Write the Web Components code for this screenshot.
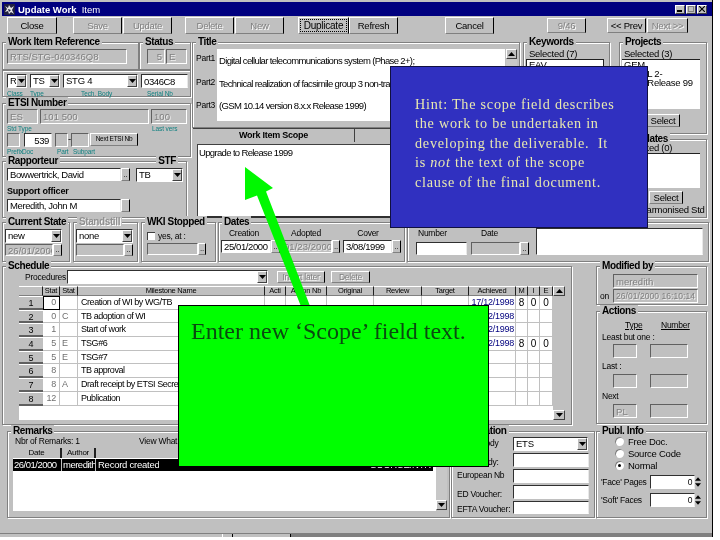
<!DOCTYPE html>
<html>
<head>
<meta charset="utf-8">
<title>Update Work Item</title>
<style>
html, body { margin: 0; padding: 0; background: #fff; }
.row { display: flex; }
.col { display: flex; flex-direction: column; }
.teal { color: #108080; font-size: 6.5px; line-height: 7px; letter-spacing: -.1px; white-space: nowrap; }
.lab { line-height: 11px; white-space: nowrap; }
.sm { font-size: 8.5px; }
.tight { letter-spacing: -.65px; }
u { text-decoration: underline; }
</style>
</head>
<body>
<wi-window>
  <wi-titlebar>Update Work&nbsp; <span style="font-weight:normal">Item</span></wi-titlebar>

  <div class="row" style="height:23px;padding-top:1px;box-sizing:border-box">
    <wi-button style="margin-left:5px;width:50px">Close</wi-button>
    <wi-button off style="margin-left:16px;width:49px">Save</wi-button>
    <wi-button off style="margin-left:1px;width:49px">Update</wi-button>
    <wi-button off style="margin-left:13px;width:49px">Delete</wi-button>
    <wi-button off style="margin-left:1px;width:49px">New</wi-button>
    <wi-button focus style="margin-left:14px;width:51px">Duplicate</wi-button>
    <wi-button style="width:49px">Refresh</wi-button>
    <wi-button style="margin-left:47px;width:49px">Cancel</wi-button>
    <wi-button off style="margin-left:53px;width:39px;height:15px;margin-top:1px">9/46</wi-button>
    <wi-button style="margin-left:21px;width:39px;height:15px;margin-top:1px">&lt;&lt; Prev</wi-button>
    <wi-button off style="margin-left:1px;width:41px;height:15px;margin-top:1px">Next &gt;&gt;</wi-button>
  </div>

  <div class="row" style="margin-top:3px;height:176px">
    <div class="col" style="width:189px">
      <div class="row">
        <wi-group label="Work Item Reference" style="width:137px;height:28px;--p:1px 0 0 4px">
          <wi-field off value="RTS/STG-040346Q8" style="width:120px;height:15px;letter-spacing:0"></wi-field>
        </wi-group>
        <wi-group label="Status" style="width:52px;height:28px;--p:1px 0 0 7px">
          <div class="row" style="gap:1px">
            <wi-field off right value="5" style="width:18px;height:15px"></wi-field>
            <wi-field off value="E" style="width:21px;height:15px"></wi-field>
          </div>
        </wi-group>
      </div>
      <wi-group style="height:27px;--p:3px 0 0 4px">
        <div class="row">
          <wi-combo value="R" style="width:20px"></wi-combo>
          <wi-combo value="TS" style="width:30px;margin-left:3px"></wi-combo>
          <wi-combo value="STG 4" style="width:75px;margin-left:3px"></wi-combo>
          <wi-field value="0346C8" style="width:47px;height:14px;margin-left:3px"></wi-field>
        </div>
        <div class="row teal" style="margin-top:2px">
          <span style="width:23px">Class</span><span style="width:33px">Type</span>
          <span style="width:78px;padding-left:18px;box-sizing:border-box">Tech. Body</span><span style="padding-left:6px">Serial Nb</span>
        </div>
      </wi-group>

      <wi-group label="ETSI Number" style="margin-top:6px;height:54px;--p:0 0 0 4px">
        <div class="row">
          <wi-field off value="ES" style="width:31px;height:15px"></wi-field>
          <wi-field off value="101 500" style="width:109px;height:15px;margin-left:2px"></wi-field>
          <wi-field off value="100" style="width:36px;height:15px;margin-left:2px"></wi-field>
        </div>
        <div class="row teal" style="margin-top:1px">
          <span style="width:145px">Std Type</span><span>Last vers</span>
        </div>
        <div class="row" style="margin-top:1px;align-items:flex-start">
          <wi-field off style="width:13px;height:14px"></wi-field>
          <wi-field right value="539" style="width:28px;height:14px;margin-left:4px"></wi-field>
          <wi-field off style="width:13px;height:14px;margin-left:3px"></wi-field>
          <span style="width:3px;text-align:center">-</span>
          <wi-field off style="width:18px;height:14px"></wi-field>
          <wi-button style="width:48px;height:13px;font-size:6.5px;margin-left:1px">Next ETSI Nb</wi-button>
        </div>
        <div class="row teal" style="margin-top:1px">
          <span style="width:12px">Prefix</span><span style="width:38px;padding-left:3px;box-sizing:border-box">Doc</span><span style="width:16px">Part</span><span>Subpart</span>
        </div>
      </wi-group>

      <wi-group label="Rapporteur" label2="STF" style="margin-top:4px;width:185px;height:57px;--p:1px 0 0 4px">
        <div class="row">
          <wi-field value="Bowwertrick, David" style="width:114px;height:13px"></wi-field>
          <wi-button style="width:9px;height:13px;font-size:8px;margin-left:0">..</wi-button>
          <wi-combo value="TB" style="width:47px;margin-left:6px"></wi-combo>
        </div>
        <div class="lab" style="margin-top:4px;font-weight:bold;font-size:9px;letter-spacing:-.2px">Support officer</div>
        <div class="row" style="margin-top:2px">
          <wi-field value="Meredith, John M" style="width:114px;height:13px"></wi-field>
          <wi-button style="width:9px;height:13px"></wi-button>
        </div>
      </wi-group>
    </div>

    <div class="col" style="width:328px;margin-left:1px">
      <wi-group label="Title" style="height:86px">
        <div class="row">
          <div class="col sm" style="width:24px;padding:5px 0 0 3px;box-sizing:border-box;gap:12.5px">
            <span class="lab">Part1</span><span class="lab">Part2</span><span class="lab">Part3</span>
          </div>
          <div class="col tight" style="width:288px;height:72px;background:#fff;margin-top:1px;padding:6px 0 0 2px;box-sizing:border-box;gap:11.5px;white-space:nowrap;overflow:hidden">
            <span class="lab">Digital cellular telecommunications system (Phase 2+);</span>
            <span class="lab">Technical realization of facsimile group 3 non-transparent</span>
            <span class="lab">(GSM 10.14 version 8.x.x Release 1999)</span>
          </div>
          <wi-scroll style="width:11px;height:72px;margin:1px 0 0 1px"></wi-scroll>
        </div>
      </wi-group>
      <div class="row" style="height:14px;margin-left:1px;border-top:1px solid #404040;box-sizing:border-box">
        <div style="width:161px;text-align:center;border-right:1px solid #404040;font-weight:bold;font-size:9px;line-height:12px">Work Item Scope</div>
        <div style="flex:1;border-right:1px solid #404040"></div>
      </div>
      <div style="height:73px;background:#fff;margin:2px 0 0 5px;border:solid #404040;border-width:1px 0 0 1px;padding:2px 0 0 1px;box-sizing:border-box" class="lab tight">Upgrade to Release 1999</div>
      <div style="height:2px;background:#303030;margin-left:1px"></div>
    </div>

    <wi-group label="Keywords" style="width:87px;height:176px;margin-left:3px;--p:0 0 0 5px">
      <div class="lab">Selected (7)</div>
      <div style="width:78px;height:60px;background:#fff;border:1px solid #202020;box-sizing:border-box;padding-left:2px;line-height:9px;margin-left:-3px">EAV</div>
    </wi-group>

    <div class="col" style="margin-left:9px;width:88px">
      <wi-group label="Projects" style="height:92px;--p:0 0 0 4px">
        <div class="lab">Selected (3)</div>
        <div style="width:78px;height:50px;background:#fff;border-top:1px solid #202020;box-sizing:border-box;padding-left:2px;line-height:9px;white-space:nowrap;margin-left:-2px">GEM<br>GSM L 2-<br>GSM Release 99</div>
        <wi-button style="width:34px;height:13px;margin:5px 0 0 22px">Select</wi-button>
      </wi-group>
      <wi-group label="Mandates" style="height:79px;margin-top:5px;--p:0 0 0 4px">
        <div class="lab" style="margin-top:-3px">Selected (0)</div>
        <div style="width:78px;height:35px;background:#fff;border-top:1px solid #202020;box-sizing:border-box;margin-left:-2px"></div>
        <wi-button style="width:34px;height:13px;margin:3px 0 0 25px">Select</wi-button>
        <div class="lab" style="margin-top:0;margin-left:16px">Harmonised Std</div>
      </wi-group>
    </div>
  </div>

  <div class="row" style="margin-top:4px;height:40px">
    <wi-group label="Current State" style="width:68px;--p:1px 0 0 2px">
      <wi-combo value="new" style="width:57px"></wi-combo>
      <div class="row" style="margin-top:1px">
        <wi-field off value="26/01/2000" style="width:48px;height:12px"></wi-field><wi-button style="width:9px;height:12px;font-size:8px">..</wi-button>
      </div>
    </wi-group>
    <wi-group label="Standstill" off style="width:65px;margin-left:3px;--p:1px 0 0 2px">
      <wi-combo value="none" style="width:57px"></wi-combo>
      <div class="row" style="margin-top:1px">
        <wi-field off style="width:48px;height:12px"></wi-field><wi-button style="width:9px;height:12px;font-size:8px">..</wi-button>
      </div>
    </wi-group>
    <wi-group label="WKI Stopped" style="width:75px;margin-left:3px;--p:1px 0 0 5px">
      <div class="row" style="align-items:center;height:13px;gap:2px">
        <div style="width:7px;height:7px;background:#fff;border:solid #404040;border-width:1px 0 0 1px"></div>
        <span class="sm" style="margin-left:1px">yes, at :</span>
      </div>
      <div class="row" style="margin-top:1px">
        <wi-field off style="width:51px;height:12px"></wi-field><wi-button style="width:8px;height:12px;font-size:8px">..</wi-button>
      </div>
    </wi-group>
    <wi-group label="Dates" style="width:187px;margin-left:2px;--p:0 0 0 2px">
      <div class="row lab sm" style="height:12px;text-align:center">
        <span style="width:46px">Creation</span><span style="width:78px">Adopted</span><span style="width:46px">Cover</span>
      </div>
      <div class="row">
        <wi-field value="25/01/2000" style="width:50px;height:13px"></wi-field><wi-button style="width:9px;height:13px;font-size:8px">..</wi-button>
        <wi-field off value="01/23/2000" style="width:51px;height:13px;margin-left:1px"></wi-field><wi-button style="width:8px;height:13px;font-size:8px">..</wi-button>
        <wi-field value="3/08/1999" style="width:49px;height:13px;margin-left:3px"></wi-field><wi-button style="width:9px;height:13px;font-size:8px">..</wi-button>
      </div>
    </wi-group>
    <wi-group style="width:302px;margin-left:2px;--p:5px 0 0 8px">
      <div class="row">
        <div class="col" style="width:120px">
          <div class="row lab sm" style="height:12px">
            <span style="width:65px;padding-left:2px;box-sizing:border-box">Number</span><span>Date</span>
          </div>
          <div class="row" style="margin-top:2px">
            <wi-field style="width:51px;height:13px"></wi-field>
            <wi-field off style="width:49px;height:13px;margin-left:4px"></wi-field><wi-button style="width:9px;height:13px;font-size:8px">..</wi-button>
          </div>
        </div>
        <wi-field style="width:167px;height:27px"></wi-field>
      </div>
    </wi-group>
  </div>

  <div class="row" style="margin-top:4px;height:159px">
    <wi-group label="Schedule" style="width:570px">
      <div class="row" style="height:14px;margin-top:-2px;align-items:center">
        <span class="lab sm" style="width:60px;padding-left:22px;box-sizing:border-box">Procedures</span>
        <wi-combo style="width:201px;margin-left:4px"></wi-combo>
        <wi-button off style="width:48px;height:12px;margin-left:9px;font-size:8.5px">Insert later</wi-button>
        <wi-button off style="width:39px;height:12px;margin-left:6px;font-size:8.5px">Delete</wi-button>
      </div>
      <wi-schedule style="margin:2px 0 0 16px"></wi-schedule>
    </wi-group>
    <div class="col" style="width:111px;margin-left:24px">
      <wi-group label="Modified by" style="height:39px;--p:0 0 0 3px">
        <wi-field off value="meredith" style="width:85px;height:14px;margin-left:13px;margin-top:2px"></wi-field>
        <div class="row" style="align-items:center;margin-top:1px">
          <span class="sm" style="width:13px">on</span>
          <wi-field off value="26/01/2000 16:10:14" style="width:85px;height:14px;font-size:8.5px"></wi-field>
        </div>
      </wi-group>
      <wi-group label="Actions" style="height:113px;margin-top:6px;--p:0 0 0 5px">
        <div class="row lab sm" style="margin-top:3px"><u style="margin-left:23px;width:36px">Type</u><u>Number</u></div>
        <div class="lab sm" style="margin-top:1px">Least but one :</div>
        <div class="row" style="margin-top:1px;gap:13px;margin-left:11px">
          <wi-field off style="width:24px;height:14px"></wi-field><wi-field off style="width:38px;height:14px"></wi-field>
        </div>
        <div class="lab sm" style="margin-top:3px">Last :</div>
        <div class="row" style="margin-top:2px;gap:13px;margin-left:11px">
          <wi-field off style="width:24px;height:14px"></wi-field><wi-field off style="width:38px;height:14px"></wi-field>
        </div>
        <div class="lab sm" style="margin-top:3px">Next</div>
        <div class="row" style="margin-top:2px;gap:13px;margin-left:11px">
          <wi-field off value="PL" style="width:24px;height:14px"></wi-field><wi-field off style="width:38px;height:14px"></wi-field>
        </div>
      </wi-group>
    </div>
  </div>

  <div class="row" style="margin-top:6px;height:87px">
    <wi-group label="Remarks" style="width:443px;margin-left:5px;--p:0 0 0 5px">
      <div class="row lab sm" style="margin-top:-1px;height:11px">
        <span style="width:126px;padding-left:2px;box-sizing:border-box">Nbr of Remarks: 1</span><span>View What:</span>
      </div>
      <wi-remarks style="margin-top:1px"></wi-remarks>
    </wi-group>
    <wi-group label="Publication" style="width:144px;margin-left:1px;--p:0 0 0 5px">
      <div class="row">
        <div class="col sm" style="width:56px;white-space:nowrap">
          <span style="height:18px;padding-top:1px;box-sizing:border-box">Resp. Body</span>
          <span style="height:14px;padding-top:2px;box-sizing:border-box">Tech. Body:</span>
          <span style="height:18px;padding-top:1px;box-sizing:border-box">European Nb</span>
          <span style="height:16px;padding-top:2px;box-sizing:border-box">ED Voucher:</span>
          <span style="height:14px;padding-top:1px;box-sizing:border-box">EFTA Voucher:</span>
        </div>
        <div class="col" style="gap:2px;width:76px">
          <wi-combo value="ETS" style="width:75px;height:14px"></wi-combo>
          <wi-field style="width:76px;height:14px"></wi-field>
          <wi-field style="width:76px;height:14px"></wi-field>
          <wi-field style="width:76px;height:14px"></wi-field>
          <wi-field style="width:76px;height:13px"></wi-field>
        </div>
      </div>
    </wi-group>
    <wi-group label="Publ. Info" style="width:111px;margin-left:1px;--p:0 0 0 4px">
      <wi-radio style="margin:-1px 0 0 14px">Free Doc.</wi-radio>
      <wi-radio style="margin:1px 0 0 14px">Source Code</wi-radio>
      <wi-radio on style="margin:1px 0 0 14px">Normal</wi-radio>
      <div class="row sm" style="margin-top:4px;align-items:center">
        <span style="width:49px;white-space:nowrap">'Face' Pages</span>
        <wi-field right value="0" style="width:45px;height:14px"></wi-field><wi-spin style="width:5px;height:14px"></wi-spin>
      </div>
      <div class="row sm" style="margin-top:4px;align-items:center">
        <span style="width:49px;white-space:nowrap">'Soft' Faces</span>
        <wi-field right value="0" style="width:45px;height:14px"></wi-field><wi-spin style="width:5px;height:14px"></wi-spin>
      </div>
    </wi-group>
  </div>

  <wi-arrow></wi-arrow>
  <wi-hint>Hint: The scope field describes<br>the work to be undertaken in<br>developing the deliverable.&nbsp; It<br>is <i>not</i> the text of the scope<br>clause of the final document.</wi-hint>
  <wi-callout>Enter new ‘Scope’ field text.</wi-callout>
</wi-window>

<script>
function define(name, css, html) {
    customElements.define(name, class extends HTMLElement {
        constructor() {
            super()
            this.attachShadow({mode: "open"})
        }
        connectedCallback() {
            this.shadowRoot.innerHTML = `<style>${css}</style>` + (typeof html === "function" ? html(this) : html)
        }
    })
}

const arrowDown = `<svg width="7" height="4" viewBox="0 0 7 4"><path d="M0 0h7L3.5 4z" fill="#000"/></svg>`
const arrowUp = `<svg width="7" height="4" viewBox="0 0 7 4"><path d="M0 4h7L3.5 0z" fill="#000"/></svg>`

define("wi-window", `
    :host {
        display: block;
        position: relative;
        box-sizing: border-box;
        width: 713px;
        height: 537px;
        padding: 2px 0 0 2px;
        background: #c0c0c0;
        color: #000;
        font: 9.5px "Liberation Sans", Arial, sans-serif;
        letter-spacing: -.25px;
        border-right: 1px solid #000;
        overflow: hidden;
        filter: blur(.3px);
    }
    .foot {
        position: absolute;
        left: 0;
        right: 0;
        bottom: 0;
        height: 3px;
        border-top: 1px solid #808080;
        background: linear-gradient(to right, #c0c0c0 222px, #fff 222px, #fff 223px, #c0c0c0 223px, #c0c0c0 232px, #000 232px, #000 233px, #c0c0c0 233px, #c0c0c0 290px, #000 290px, #000 291px, #808080 291px);
    }
`, `<slot></slot><div class="foot"></div>`)

define("wi-titlebar", `
    :host {
        display: flex;
        align-items: center;
        box-sizing: border-box;
        height: 14px;
        padding-left: 2px;
        background: #00007f;
        color: #fff;
        font-weight: bold;
        font-size: 9.5px;
        letter-spacing: 0;
    }
    svg.logo { margin-right: 3px; }
    .title { flex: 1; white-space: nowrap; }
    .btns { display: flex; margin-right: 5px; gap: 1px; }
    .btns div {
        width: 10px;
        height: 9px;
        background: #c0c0c0;
        box-sizing: border-box;
        border: solid;
        border-color: #fff #404040 #404040 #fff;
        border-width: 1px;
        display: flex;
        align-items: center;
        justify-content: center;
    }
`, `
    <svg class="logo" width="11" height="11" viewBox="0 0 11 11">
        <rect width="11" height="11" fill="#202040"/>
        <path d="M1 2l3 2 1-3 2 3 3-2-2 4 2 4-3-2-2 2-1-3-3 1 2-3z" fill="#e8e8e8"/>
        <path d="M4 5l3 1-2 2z" fill="#202040"/>
    </svg>
    <div class="title"><slot></slot></div>
    <div class="btns">
        <div><svg width="6" height="6"><rect x="0" y="4" width="5" height="2" fill="#000"/></svg></div>
        <div><svg width="6" height="6"><rect x=".5" y=".5" width="5" height="5" fill="none" stroke="#808080"/></svg></div>
        <div><svg width="6" height="6"><path d="M0 0l6 6M6 0l-6 6" stroke="#000" stroke-width="1.2"/></svg></div>
    </div>
`)

define("wi-button", `
    :host {
        display: flex;
        align-items: center;
        justify-content: center;
        box-sizing: border-box;
        height: 17px;
        flex: none;
        background: #c0c0c0;
        border: solid;
        border-width: 1px;
        border-color: #fff #000 #808080 #fff;
        line-height: 1;
        white-space: nowrap;
    }
    :host([off]) { color: #808080; text-shadow: 1px 1px 0 #fff; }
    .focus { display: flex; align-items: center; justify-content: center; width: 45px; height: 11px; outline: 1px dotted #000; }
    :host([focus]) { font-size: 10px; }
`, el => el.hasAttribute("focus") ? `<span class="focus"><slot></slot></span>` : `<slot></slot>`)

define("wi-group", `
    :host {
        display: block;
        box-sizing: border-box;
        flex: none;
        border: 1px solid #808080;
        box-shadow: inset 1px 1px 0 #fff, 1px 1px 0 #fff;
    }
    .legend {
        display: flex;
        height: 12px;
        margin: -7px 0 0 3px;
        font-weight: bold;
        font-size: 10px;
        line-height: 12px;
        letter-spacing: -.4px;
    }
    .legend span { background: #c0c0c0; padding: 0 2px; white-space: nowrap; }
    .legend span + span { margin-left: auto; margin-right: 8px; }
    :host([off]) .legend { color: #909090; text-shadow: 1px 1px 0 #fff; }
    .body { padding: var(--p, 0); }
`, el => {
    const a = el.getAttribute("label"), b = el.getAttribute("label2")
    const legend = a ? `<div class="legend"><span>${a}</span>${b ? `<span>${b}</span>` : ""}</div>` : ""
    return legend + `<div class="body"><slot></slot></div>`
})

define("wi-field", `
    :host {
        box-sizing: border-box;
        flex: none;
        background: #fff;
        border: solid;
        border-width: 1px;
        border-color: #303030 #e8e8e8 #fff #303030;
        padding: 0 2px;
        white-space: nowrap;
        overflow: hidden;
        display: flex;
        align-items: center;
        letter-spacing: -.4px;
    }
    :host([off]) { background: #c0c0c0; color: #808080; text-shadow: 1px 1px 0 #eee; border-color: #606060 #fff #fff #606060; letter-spacing: .05px; }
    :host([right]) { justify-content: flex-end; }
`, el => `${el.getAttribute("value") || ""}`)

define("wi-combo", `
    :host {
        display: flex;
        box-sizing: border-box;
        flex: none;
        height: 14px;
        background: #fff;
        border: solid;
        border-width: 1px;
        border-color: #303030 #fff #fff #303030;
    }
    .v { flex: 1; padding-left: 2px; line-height: 12px; white-space: nowrap; overflow: hidden; min-width: 0; }
    .a {
        width: 10px;
        flex: none;
        background: #c0c0c0;
        border: solid;
        border-width: 1px;
        border-color: #fff #404040 #404040 #fff;
        box-sizing: border-box;
        display: flex;
        align-items: center;
        justify-content: center;
    }
`, el => `<div class="v">${el.getAttribute("value") || ""}</div><div class="a">${arrowDown}</div>`)

define("wi-scroll", `
    :host { display: flex; flex-direction: column; justify-content: space-between; box-sizing: border-box; flex: none; background: #c8c8c8; }
    div {
        height: 10px;
        background: #c0c0c0;
        border: solid;
        border-width: 1px;
        border-color: #fff #404040 #404040 #fff;
        box-sizing: border-box;
        display: flex;
        align-items: center;
        justify-content: center;
    }
`, () => `<div>${arrowUp}</div><div>${arrowDown}</div>`)

define("wi-spin", `
    :host { display: flex; flex-direction: column; flex: none; width: 7px; align-items: center; justify-content: center; gap: 2px; background: #c0c0c0; box-sizing: border-box; }
    svg { display: block; }
`, () => arrowUp.replace(/width="7"/, 'width="6"') + arrowDown.replace(/width="7"/, 'width="6"'))

define("wi-radio", `
    :host { display: flex; align-items: center; height: 11px; font-size: 9.5px; white-space: nowrap; }
    i {
        display: block;
        position: relative;
        width: 9px;
        height: 9px;
        border-radius: 50%;
        background: #fff;
        box-shadow: inset 1px 1px 0 #808080;
        margin-right: 4px;
    }
    :host([on]) i::after { content: ""; position: absolute; left: 3px; top: 3px; width: 3px; height: 3px; border-radius: 50%; background: #000; }
`, `<i></i><slot></slot>`)

const schedCols = [24, 17, 18, 187, 21, 41, 47, 48, 47, 47, 12, 12, 13]
const schedHead = ["", "Stat", "Stat", "Milestone Name", "Acti", "Action Nb", "Original", "Review", "Target", "Achieved", "M", "I", "E"]
const schedRows = [
    ["1", "0", "", "Creation of WI by WG/TB", "17/12/1998", "8", "0", "0"],
    ["2", "0", "C", "TB adoption of WI", "17/12/1998", "", "", ""],
    ["3", "1", "", "Start of work", "17/12/1998", "", "", ""],
    ["4", "5", "E", "TSG#6", "17/12/1998", "8", "0", "0"],
    ["5", "5", "E", "TSG#7", "", "", "", ""],
    ["6", "8", "", "TB approval", "", "", "", ""],
    ["7", "8", "A", "Draft receipt by ETSI Secretariat", "", "", "", ""],
    ["8", "12", "", "Publication", "", "", "", ""]
]

define("wi-schedule", `
    :host { display: flex; }
    .g {
        display: grid;
        grid-template-columns: ${schedCols.map(w => w + "px").join(" ")};
        grid-template-rows: 10px repeat(8, 13.7px) 14.4px;
        background: #fff;
        font-size: 9px;
    }
    .g > div { box-sizing: border-box; white-space: nowrap; overflow: hidden; }
    .h { background: #c0c0c0; border-right: 1px solid #202020; border-top: 1px solid #fff; border-bottom: 1px solid #808080; text-align: center; font-size: 7.5px; line-height: 8px; }
    .rh { background: #c0c0c0; border-top: 1px solid #fff; border-bottom: 2px solid #606060; text-align: center; line-height: 12px; }
    .c { border-right: 1px solid #c0c0c0; border-bottom: 1px solid #c0c0c0; padding: 0 2px; line-height: 13.4px; }
    .s { color: #707070; text-align: right; padding-right: 3px; }
    .f { box-shadow: inset 0 0 0 1px #000; border: 0; padding-right: 4px; }
    .d { color: #00007f; text-align: right; padding: 0 1px 0 0; }
    .n { text-align: center; padding: 0; font-size: 10px; }
    .l { padding-left: 3px; letter-spacing: -.45px; }
    .sb { width: 12px; height: 134px; background: #c0c0c0; }
`, () => {
    let h = `<div class="g">`
    schedHead.forEach(t => h += `<div class="h">${t}</div>`)
    schedRows.forEach((r, i) => {
        h += `<div class="rh">${r[0]}</div>`
        h += `<div class="c s${i == 0 ? " f" : ""}">${r[1]}</div>`
        h += `<div class="c" style="color:#707070">${r[2]}</div>`
        h += `<div class="c l">${r[3]}</div>`
        h += `<div class="c"></div><div class="c"></div><div class="c"></div><div class="c"></div><div class="c"></div>`
        h += `<div class="c d">${r[4]}</div>`
        h += `<div class="c n">${r[5]}</div><div class="c n">${r[6]}</div><div class="c n">${r[7]}</div>`
    })
    h += `</div><wi-scroll class="sb"></wi-scroll>`
    return h
})

define("wi-remarks", `
    :host { display: block; width: 434px; font-size: 9.5px; }
    .hd { display: flex; height: 11px; background: #c0c0c0; font-size: 8px; line-height: 10px; border-bottom: 1px solid #fff; box-sizing: border-box; text-align: center; }
    .hd div { border-right: 2px solid #202020; box-sizing: border-box; }
    .sel { display: flex; height: 12px; margin-right: 3px; background: #000; color: #fff; line-height: 12px; white-space: nowrap; }
    .sel div { padding-left: 1px; box-sizing: border-box; border-right: 1px solid #c0c0c0; overflow: hidden; letter-spacing: -.5px; }
    .sel div.end { margin-left: auto; border: 0; padding-right: 2px; letter-spacing: -.2px; }
    .wrap { display: flex; }
    .list { flex: 1; background: #fff; height: 63px; }
`, `
    <div class="wrap">
        <div class="list">
            <div class="hd"><div style="width:49px">Date</div><div style="width:34px">Author</div></div>
            <div class="sel"><div style="width:49px">26/01/2000</div><div style="width:34px">meredith</div><div style="border:0;padding-left:2px;letter-spacing:-.25px">Record created</div><div class="end">SOURCE/NTR</div></div>
        </div>
        <wi-scroll style="width:11px;height:62px"></wi-scroll>
    </div>
`)

define("wi-hint", `
    :host {
        position: absolute;
        left: 390px;
        top: 66px;
        width: 258px;
        height: 162px;
        box-sizing: border-box;
        padding: 28px 0 0 24px;
        background: #3030c0;
        border: 1px solid #101040;
        color: #e8e8b0;
        font: 14.2px/19.4px "Liberation Serif", "Times New Roman", serif;
        letter-spacing: .75px;
        white-space: nowrap;
    }
`, `<slot></slot>`)

define("wi-callout", `
    :host {
        position: absolute;
        left: 178px;
        top: 305px;
        width: 311px;
        height: 162px;
        box-sizing: border-box;
        padding: 11px 0 0 12px;
        background: #00ff00;
        border: 1px solid #000;
        color: #0a4a10;
        font: 24px/28px "Liberation Serif", "Times New Roman", serif;
        letter-spacing: 0;
        white-space: nowrap;
    }
`, `<slot></slot>`)

define("wi-arrow", `
    :host { position: absolute; left: 0; top: 0; width: 713px; height: 537px; pointer-events: none; }
    svg { display: block; }
`, `<svg width="713" height="537" viewBox="0 0 713 537">
    <polygon points="245,167 273,188 266,191.5 310,306 302,309 257,195.5 245,200" fill="#00f800"/>
</svg>`)
</script>
</body>
</html>
